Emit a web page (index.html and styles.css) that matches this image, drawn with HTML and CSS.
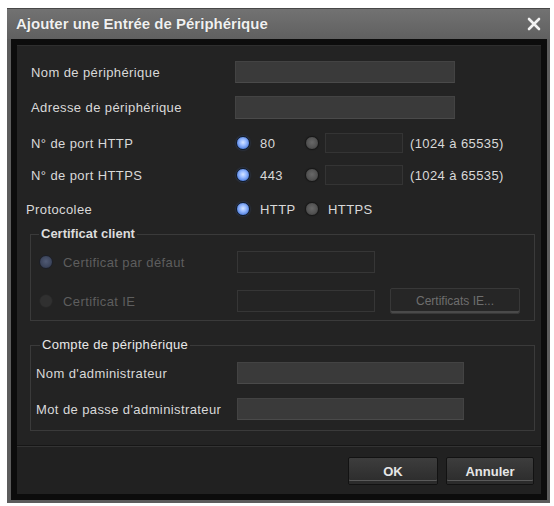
FILE: index.html
```html
<!DOCTYPE html>
<html lang="fr">
<head>
<meta charset="utf-8">
<title>Ajouter une Entrée de Périphérique</title>
<link rel="stylesheet" href="styles.css">
</head>
<body>
<div class="dialog">
  <div class="titlebar">
    <span class="title">Ajouter une Entrée de Périphérique</span>
    <svg class="close" width="14" height="14" viewBox="0 0 14 14"><path d="M2 2 L12 12 M12 2 L2 12" stroke="#f2f2f2" stroke-width="2.6" stroke-linecap="round"/></svg>
  </div>
  <div class="frame">
    <div class="content">
      <div class="form">
        <div class="row r1"><span class="lbl">Nom de périphérique</span><div class="field wide"></div></div>
        <div class="row r2"><span class="lbl">Adresse de périphérique</span><div class="field wide"></div></div>
        <div class="row r3">
          <span class="lbl">N° de port HTTP</span>
          <span class="opt"><span class="radio on"></span><span class="otext">80</span></span>
          <span class="radio"></span><div class="field port"></div><span class="range">(1024 à 65535)</span>
        </div>
        <div class="row r4">
          <span class="lbl">N° de port HTTPS</span>
          <span class="opt"><span class="radio on"></span><span class="otext">443</span></span>
          <span class="radio"></span><div class="field port"></div><span class="range">(1024 à 65535)</span>
        </div>
        <div class="row r5">
          <span class="lbl lbl-proto">Protocolee</span>
          <span class="opt"><span class="radio on"></span><span class="otext">HTTP</span></span>
          <span class="radio"></span><span class="otext wide-gap">HTTPS</span>
        </div>
      </div>
      <fieldset class="group cert">
        <legend class="legend strong">Certificat client</legend>
        <div class="row c1">
          <span class="clbl"><span class="radio dis-on"></span><span class="dtext">Certificat par défaut</span></span>
          <div class="field dis cfield"></div>
        </div>
        <div class="row c2">
          <span class="clbl"><span class="radio dis"></span><span class="dtext">Certificat IE</span></span>
          <div class="field dis cfield"></div>
          <button class="btn btn-dis" type="button">Certificats IE...</button>
        </div>
      </fieldset>
      <fieldset class="group acct">
        <legend class="legend">Compte de périphérique</legend>
        <div class="row a1"><span class="albl">Nom d'administrateur</span><div class="field afield"></div></div>
        <div class="row a2"><span class="albl">Mot de passe d'administrateur</span><div class="field afield"></div></div>
      </fieldset>
      <div class="buttonbar">
        <button class="btn btn-ok" type="button">OK</button>
        <button class="btn btn-cancel" type="button">Annuler</button>
      </div>
    </div>
  </div>
</div>
</body>
</html>
```
FILE: styles.css
```css
html, body {
  margin: 0;
  padding: 0;
  background: #ffffff;
}
body {
  font-family: "Liberation Sans", Arial, sans-serif;
  font-size: 13px;
  color: #d9d9d9;
}
.dialog {
  margin: 8px 0 0 7px;
  width: 543px;
  height: 495px;
  box-sizing: border-box;
  background: #5c5c5c;
  padding: 0 3px 4px 4px;
  border-top: 1px solid #474747;
  overflow: hidden;
}
.titlebar {
  height: 29px;
  display: flex;
  align-items: center;
  justify-content: space-between;
  padding: 0 9px 1px 9px;
  background: linear-gradient(#727272, #606060);
  margin: 0 -3px 0 -4px;
}
.title {
  color: #f0f0f0;
  font-weight: bold;
  font-size: 15px;
  text-shadow: 0 0 1px rgba(0,0,0,0.4);
}
.close {
  display: block;
}
.frame {
  background: #0c0c0c;
  padding: 6px;
  height: 461px;
  box-sizing: border-box;
}
.content {
  background: #232323;
  height: 449px;
  overflow: hidden;
  border-top: 1px solid #2e2e2e;
  box-sizing: border-box;
}
.form {
  padding-top: 15px;
}
.row {
  display: flex;
  align-items: center;
  letter-spacing: 0.4px;
}
.form .row {
  padding-left: 14px;
}
.lbl {
  width: 204px;
  flex: none;
}
.lbl-proto {
  margin-left: -5px;
  width: 209px;
}
.r1 { height: 22px; }
.r2 { height: 23px; margin-top: 13px; }
.r3 { height: 20px; margin-top: 14px; }
.r4 { height: 20px; margin-top: 12px; }
.r5 { height: 16px; margin-top: 16px; }
.field {
  flex: none;
  height: 100%;
  box-sizing: border-box;
  background: #3a3a3a;
  border: 1px solid #434343;
  border-bottom-color: #4a4a4a;
}
.wide { width: 220px; }
.port {
  width: 78px;
  height: 20px;
  margin-left: 6px;
  background: #262626;
  border-color: #343434;
}
.range {
  margin-left: 7px;
}
.opt {
  display: flex;
  align-items: center;
  width: 69px;
  margin-left: 1px;
  flex: none;
}
.otext {
  margin-left: 10px;
}
.wide-gap {
  margin-left: 9px;
}
.radio {
  width: 14px;
  height: 14px;
  border-radius: 50%;
  flex: none;
  box-sizing: border-box;
  background: radial-gradient(circle at 50% 45%, #686868 0%, #555555 50%, #3e3e3e 100%);
  border: 1px solid #181818;
  box-shadow: 0 0 1px rgba(0,0,0,0.6);
}
.radio.on {
  background: radial-gradient(circle at 50% 45%, #d4e4ff 0%, #98baff 35%, #5684e0 72%, #223c6a 100%);
  border: 1px solid #0f1a2c;
  box-shadow: 0 0 2px rgba(90,140,230,0.45);
}
.radio.dis-on {
  background: radial-gradient(circle at 50% 45%, #505a74 0%, #3c455c 60%, #2a3040 100%);
  border: 1px solid #1c1f28;
  box-shadow: none;
}
.radio.dis {
  background: #303030;
  border: 1px solid #262626;
  box-shadow: none;
}
.group {
  border: 1px solid #3a3a3a;
  margin: 0 6px 0 13px;
  min-width: 0;
  box-sizing: border-box;
}
.legend {
  padding: 0 2px;
  line-height: 14px;
  color: #e8e8e8;
  letter-spacing: 0.3px;
}
.legend.strong {
  font-weight: bold;
  color: #dcdcdc;
  letter-spacing: 0;
}
.cert {
  margin-top: 10px;
  padding: 0 0 6px 8px;
}
.clbl {
  display: flex;
  align-items: center;
  width: 198px;
  flex: none;
}
.dtext {
  margin-left: 10px;
  color: #5e5e5e;
}
.c1 { height: 22px; margin-top: 10px; }
.c2 { height: 26px; margin-top: 15px; }
.field.dis {
  background: #242424;
  border: 1px solid #363636;
}
.cfield {
  width: 138px;
  height: 22px;
}
.btn {
  font-family: "Liberation Sans", Arial, sans-serif;
  box-sizing: border-box;
  border-radius: 2px;
  cursor: default;
  padding: 0;
}
.btn-dis {
  margin-left: 15px;
  width: 130px;
  height: 26px;
  background: #262626;
  border: 1px solid #383838;
  color: #6e6e6e;
  font-size: 12px;
  box-shadow: inset 0 -2px 0 #4a4a4a;
}
.acct {
  margin-top: 17px;
  padding: 0 0 10px 5px;
}
.acct .legend {
  margin-left: 4px;
}
.albl {
  width: 201px;
  flex: none;
}
.afield {
  width: 227px;
  height: 22px;
}
.a1 { height: 22px; margin-top: 10px; }
.a2 { height: 22px; margin-top: 14px; }
.buttonbar {
  margin-top: 15px;
  border-top: 1px solid #333333;
  box-shadow: 0 -1px 0 #161616;
  background: #212121;
  display: flex;
  justify-content: flex-end;
  gap: 8px;
  padding: 10px 7px 10px 0;
  height: 60px;
  box-sizing: border-box;
}
.btn-ok, .btn-cancel {
  height: 28px;
  background: linear-gradient(#3d3d3d, #2b2b2b);
  border: 1px solid #121212;
  color: #e6e6e6;
  font-weight: bold;
  font-size: 13px;
  box-shadow: inset 0 -3px 0 #2b2b2b, inset 0 -4px 0 #5a5a5a;
}
.btn-ok { width: 90px; }
.btn-cancel { width: 88px; }
```
